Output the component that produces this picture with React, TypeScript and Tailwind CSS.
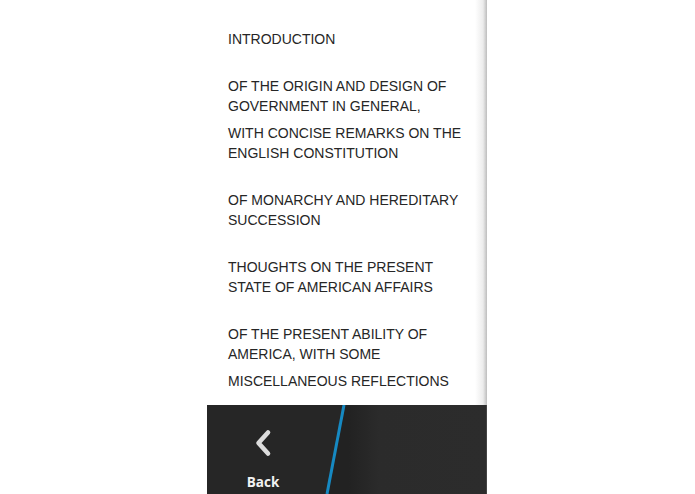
import React from 'react';

const chapters: string[][] = [
  ['INTRODUCTION'],
  ['OF THE ORIGIN AND DESIGN OF GOVERNMENT IN GENERAL,', 'WITH CONCISE REMARKS ON THE ENGLISH CONSTITUTION'],
  ['OF MONARCHY AND HEREDITARY SUCCESSION'],
  ['THOUGHTS ON THE PRESENT STATE OF AMERICAN AFFAIRS'],
  ['OF THE PRESENT ABILITY OF AMERICA, WITH SOME', 'MISCELLANEOUS REFLECTIONS'],
];

const App: React.FC = () => {
  return (
    <div className="w-[695px] h-[494px] bg-white flex overflow-hidden font-['Liberation_Sans',Arial,sans-serif]">
      <div className="ml-[207px] w-[280px] h-full flex flex-col">
        {/* chapter list */}
        <div className="flex-1 overflow-hidden bg-[linear-gradient(to_left,#bdbdbd,#ececec_4px,#ffffff_12px)] pt-[29px] pl-[21px] pr-[24px]">
          <div className="flex flex-col gap-[27px]">
            {chapters.map((parts, i) => (
              <div key={i} className="flex flex-col gap-[7px]">
                {parts.map((p, j) => (
                  <p key={j} className="text-[14px] leading-[20px] text-[#262626]">
                    {p}
                  </p>
                ))}
              </div>
            ))}
          </div>
        </div>

        {/* action bar */}
        <div className="h-[89px] shrink-0 flex bg-[#262626]">
          <div className="w-[112px] flex flex-col items-center pt-[24px]">
            <svg width="20" height="28" viewBox="0 0 20 28" className="text-[#dcdcdc]">
              <path d="M15 3.5 L5.5 14 L15 24.5" fill="none" stroke="currentColor" strokeWidth="4.6" strokeLinecap="round" strokeLinejoin="round" />
            </svg>
            <span className="mt-[17px] text-[13.5px] font-bold leading-[16px] text-[#f2f2f2] font-['Open_Sans',sans-serif]">
              Back
            </span>
          </div>
          <svg width="30" height="89" viewBox="0 0 30 89" className="shrink-0">
            <polygon points="26.5,0 30,0 30,89 9.5,89" fill="#222" />
            <line x1="25" y1="0" x2="8" y2="89" stroke="#1689c2" strokeWidth="3" />
          </svg>
          <div className="flex-1 bg-[linear-gradient(to_right,#222,#2b2b2b_30px,#2c2c2c)] border-r border-[#444]" />
        </div>
      </div>
    </div>
  );
};

export default App;
